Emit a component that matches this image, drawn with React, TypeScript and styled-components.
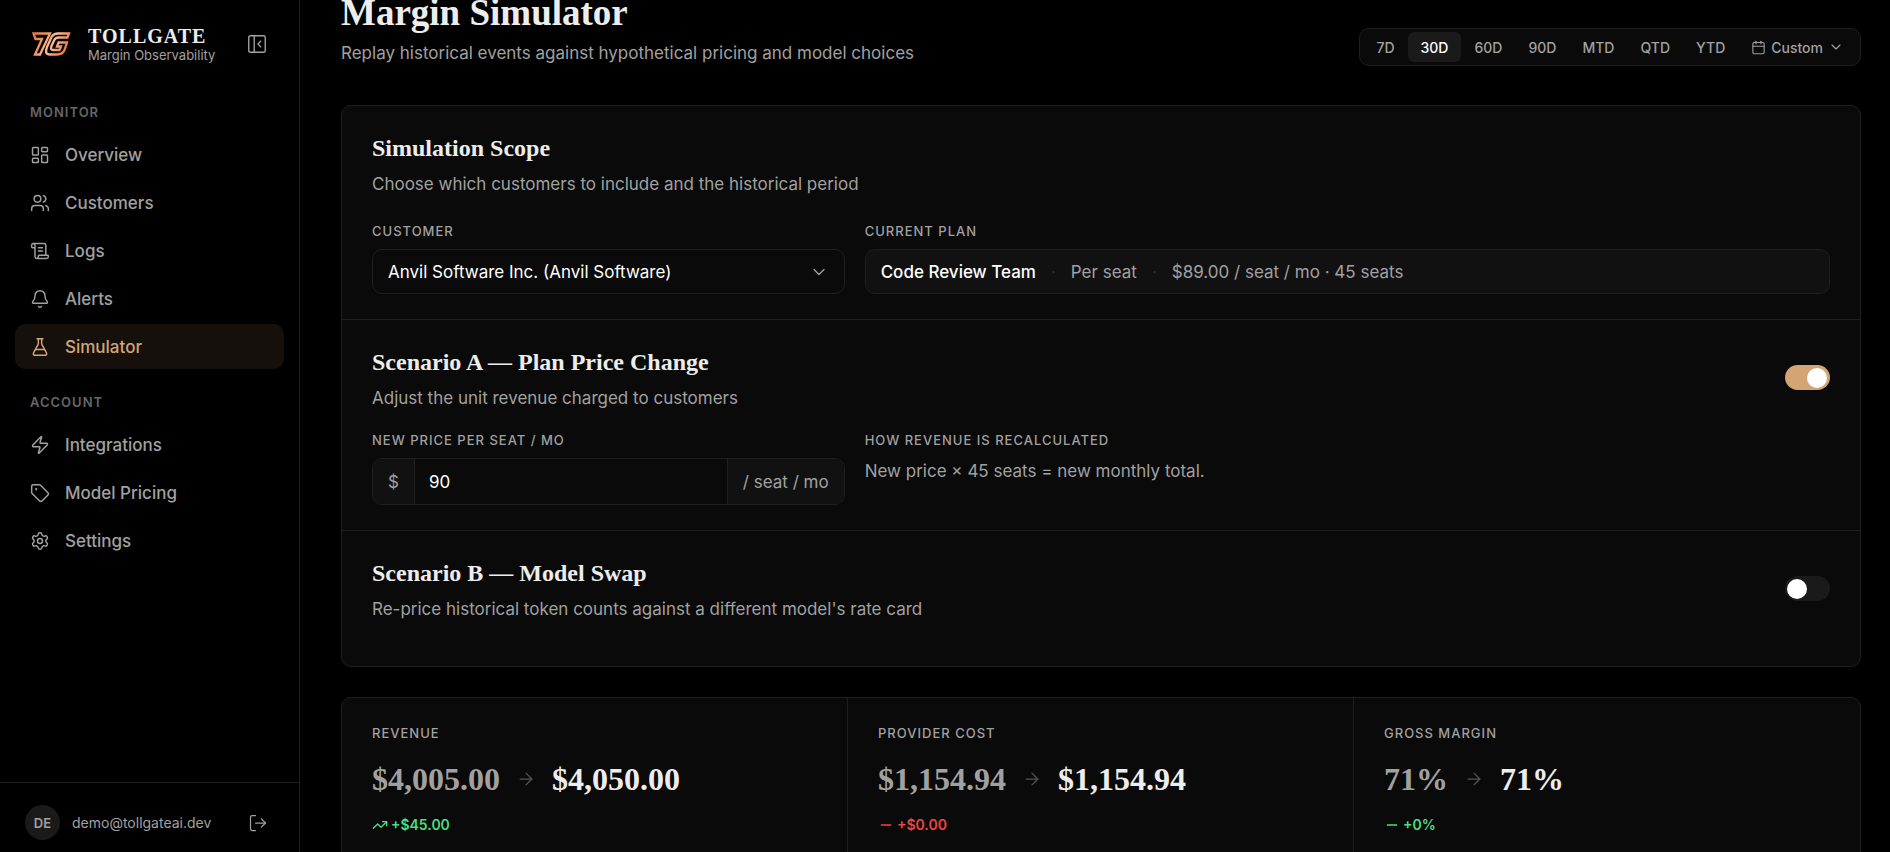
import React, { useState } from "react";
import styled, { createGlobalStyle } from "styled-components";
import {
  ArrowRight,
  Bell,
  Calendar,
  ChevronDown,
  FlaskConical,
  LayoutDashboard,
  LogOut,
  Minus,
  PanelLeftClose,
  ScrollText,
  Settings,
  Tag,
  TrendingUp,
  Users,
  Zap,
} from "lucide-react";

const sans = `Inter, "Liberation Sans", sans-serif`;
const serif = `"Liberation Serif", serif`;

const color = {
  bg: "#000000",
  panel: "#0a0a0a",
  inset: "#111111",
  raised: "#1a1a1a",
  line: "#1f1f1f",
  text: "#ededed",
  strong: "#ffffff",
  muted: "#a1a1a1",
  faint: "#666666",
  ghost: "#555555",
  accent: "#d4a574",
  accentBg: "#15100c",
  good: "#4ade80",
  bad: "#ef4444",
};

const GlobalStyle = createGlobalStyle`
  *, *::before, *::after { box-sizing: border-box; }
  html, body { height: 100%; }
  body {
    margin: 0;
    overflow: hidden;
    background: ${color.bg};
    color: ${color.text};
    font-family: ${sans};
    font-size: 17px;
  }
  button, input, select { font: inherit; color: inherit; margin: 0; }
  h1, h2, p { margin: 0; }
`;

const Shell = styled.div`
  display: flex;
  height: 100vh;
`;

const Sidebar = styled.aside`
  display: flex;
  flex-direction: column;
  flex: 0 0 300px;
  border-right: 1px solid ${color.line};
`;

const Brand = styled.div`
  display: flex;
  align-items: center;
  height: 88px;
  padding: 0 31px;
`;

const BrandText = styled.div`
  flex: 1;
  margin-left: 17px;
  padding-top: 2px;
`;

const BrandName = styled.div`
  font-family: ${serif};
  font-weight: 700;
  font-size: 20px;
  line-height: 20px;
  letter-spacing: 1px;
`;

const BrandTagline = styled.div`
  font-size: 13px;
  line-height: 18px;
  white-space: nowrap;
  color: ${color.muted};
`;

const IconButton = styled.button`
  display: flex;
  padding: 0;
  border: 0;
  background: none;
  color: ${color.muted};
  cursor: pointer;
`;

const Nav = styled.nav`
  flex: 1;
  padding: 14px 15px 0;
`;

const NavGroup = styled.div`
  display: flex;
  flex-direction: column;
  gap: 3px;
  margin-bottom: 23px;
`;

const NavHeading = styled.div`
  margin-bottom: 7px;
  padding-left: 15px;
  font-size: 13px;
  font-weight: 600;
  line-height: 20px;
  letter-spacing: 1px;
  text-transform: uppercase;
  color: ${color.faint};
`;

const NavLink = styled.a<{ $active?: boolean }>`
  display: flex;
  align-items: center;
  gap: 15px;
  height: 45px;
  padding: 0 15px;
  border-radius: 10px;
  font-weight: 500;
  text-decoration: none;
  color: ${(p) => (p.$active ? color.accent : color.muted)};
  background: ${(p) => (p.$active ? color.accentBg : "transparent")};
`;

const Account = styled.div`
  display: flex;
  align-items: center;
  height: 70px;
  padding: 10px 31px 0 25px;
  border-top: 1px solid ${color.line};
`;

const Avatar = styled.div`
  display: flex;
  align-items: center;
  justify-content: center;
  width: 35px;
  height: 35px;
  border-radius: 50%;
  background: ${color.raised};
  font-size: 13px;
  font-weight: 600;
  color: ${color.muted};
`;

const Email = styled.div`
  flex: 1;
  margin-left: 12px;
  font-size: 14px;
  color: ${color.muted};
`;

const Main = styled.main`
  flex: 1;
  min-width: 0;
  overflow: hidden;
  padding: 0 29px 0 41px;
`;

const PageHeader = styled.header`
  display: flex;
  align-items: flex-end;
  justify-content: space-between;
  margin: -6px 0 39px;
`;

const PageTitle = styled.h1`
  font-family: ${serif};
  font-size: 37px;
  font-weight: 700;
  line-height: 38px;
`;

const Lead = styled.p`
  margin-top: 9px;
  line-height: 25px;
  color: ${color.muted};
`;

const Ranges = styled.div`
  display: flex;
  padding: 3px;
  border: 1px solid ${color.line};
  border-radius: 10px;
  background: ${color.panel};
`;

const RangeButton = styled.button<{ $active?: boolean }>`
  display: flex;
  align-items: center;
  gap: 5px;
  height: 30px;
  padding: 0 13px;
  border: 0;
  border-radius: 6px;
  font-size: 14px;
  font-weight: 500;
  cursor: pointer;
  color: ${(p) => (p.$active ? color.strong : color.muted)};
  background: ${(p) => (p.$active ? color.raised : "transparent")};
`;

const Card = styled.section`
  border: 1px solid ${color.line};
  border-radius: 10px;
  background: ${color.panel};
`;

const Section = styled.div`
  padding: 30px 30px 25px;

  & + & {
    border-top: 1px solid ${color.line};
  }
`;

const SectionHeader = styled.div<{ $roomy?: boolean }>`
  display: flex;
  align-items: flex-start;
  justify-content: space-between;
  margin-bottom: ${(p) => (p.$roomy ? 24 : 19)}px;
`;

const SectionTitle = styled.h2`
  font-family: ${serif};
  font-size: 24px;
  font-weight: 700;
  line-height: 25px;
`;

const SectionLead = styled(Lead)`
  margin-top: 11px;
`;

const Fields = styled.div`
  display: grid;
  grid-template-columns: repeat(12, minmax(0, 1fr));
  gap: 20px;
`;

const Field = styled.div<{ $span: number }>`
  grid-column: span ${(p) => p.$span};
`;

const FieldLabel = styled.label`
  display: block;
  margin-bottom: 8px;
  font-size: 13px;
  font-weight: 500;
  line-height: 20px;
  letter-spacing: 1px;
  text-transform: uppercase;
  color: ${color.muted};
`;

const SelectBox = styled.div`
  display: grid;
  align-items: center;

  & > * {
    grid-area: 1 / 1;
  }

  & > svg {
    justify-self: end;
    margin-right: 16px;
    color: ${color.muted};
    pointer-events: none;
  }
`;

const Select = styled.select`
  appearance: none;
  width: 100%;
  height: 45px;
  padding: 0 40px 0 15px;
  border: 1px solid ${color.line};
  border-radius: 10px;
  background: ${color.panel};
  color: ${color.strong};
`;

const Plan = styled.div`
  display: flex;
  align-items: center;
  gap: 15px;
  height: 45px;
  padding: 0 15px;
  border: 1px solid ${color.line};
  border-radius: 10px;
  background: ${color.inset};
  color: ${color.muted};
`;

const PlanName = styled.span`
  font-weight: 500;
  color: ${color.strong};
`;

const Dot = styled.span`
  color: #2c2c2c;
`;

const PriceBox = styled.div`
  display: flex;
  height: 47px;
  overflow: hidden;
  border: 1px solid ${color.line};
  border-radius: 10px;
`;

const Affix = styled.span`
  display: flex;
  align-items: center;
  padding: 0 15px;
  background: ${color.inset};
  color: ${color.muted};
`;

const PriceInput = styled.input`
  flex: 1;
  min-width: 0;
  padding: 0 14px;
  border: 0;
  border-left: 1px solid ${color.line};
  border-right: 1px solid ${color.line};
  background: ${color.panel};
  color: ${color.strong};
  outline: none;
`;

const Note = styled.p`
  line-height: 26px;
  color: ${color.muted};
`;

const Switch = styled.input`
  appearance: none;
  display: flex;
  align-items: center;
  width: 45px;
  height: 25px;
  margin-top: 15px;
  padding: 0 3px 0 2px;
  border-radius: 13px;
  background: ${color.raised};
  cursor: pointer;

  &::before {
    content: "";
    width: 20px;
    height: 20px;
    border-radius: 50%;
    background: ${color.strong};
  }

  &:checked {
    justify-content: flex-end;
    background: ${color.accent};
  }
`;

const Stats = styled(Card)`
  display: grid;
  grid-template-columns: repeat(3, minmax(0, 1fr));
  margin-top: 30px;
`;

const Stat = styled.div`
  padding: 25px 30px;

  &:not(:last-child) {
    border-right: 1px solid ${color.line};
  }
`;

const StatLabel = styled.div`
  font-size: 13px;
  font-weight: 500;
  line-height: 20px;
  letter-spacing: 1px;
  text-transform: uppercase;
  color: ${color.muted};
`;

const StatValues = styled.div`
  display: flex;
  align-items: center;
  gap: 16px;
  margin: 16px 0;
  font-family: ${serif};
  font-size: 32px;
  font-weight: 700;
  line-height: 40px;

  & > svg {
    color: ${color.ghost};
  }
`;

const Before = styled.span`
  color: ${color.muted};
`;

const Delta = styled.div<{ $bad?: boolean }>`
  display: flex;
  align-items: center;
  gap: 3px;
  font-size: 14px;
  font-weight: 600;
  line-height: 20px;
  color: ${(p) => (p.$bad ? color.bad : color.good)};
`;

const Logo = () => (
  <svg width="40" height="24" viewBox="0 0 40 24" fill="none" aria-hidden="true">
    <defs>
      <linearGradient id="copper" gradientUnits="userSpaceOnUse" x1="0" y1="0" x2="40" y2="24">
        <stop offset="0" stopColor="#d96f45" />
        <stop offset="0.3" stopColor="#f0935f" />
        <stop offset="0.5" stopColor="#fbc09c" />
        <stop offset="0.75" stopColor="#ee8a5c" />
        <stop offset="1" stopColor="#d96f45" />
      </linearGradient>
    </defs>
    <g stroke="url(#copper)" strokeWidth="2.3" strokeLinejoin="miter">
      <path d="M2.500 1.500H19L9 22.500H4L11 7H4.500Z" />
      <path d="M38 1.500H27Q22.500 1.500 20.500 5L16 15Q13 22.500 19 22.500H26Q31.500 22.500 33.500 18L36 10.500H27.500L26 14.500H30L28.500 18H22Q19 18 20.500 14L23 8.500Q24.500 5.500 27.500 5.500H36.500Z" />
    </g>
  </svg>
);

const navGroups = [
  {
    title: "Monitor",
    items: [
      { label: "Overview", Icon: LayoutDashboard },
      { label: "Customers", Icon: Users },
      { label: "Logs", Icon: ScrollText },
      { label: "Alerts", Icon: Bell },
      { label: "Simulator", Icon: FlaskConical },
    ],
  },
  {
    title: "Account",
    items: [
      { label: "Integrations", Icon: Zap },
      { label: "Model Pricing", Icon: Tag },
      { label: "Settings", Icon: Settings },
    ],
  },
];

const ranges = ["7D", "30D", "60D", "90D", "MTD", "QTD", "YTD"];

const stats = [
  { label: "Revenue", before: "$4,005.00", after: "$4,050.00", delta: "+$45.00", Icon: TrendingUp },
  { label: "Provider cost", before: "$1,154.94", after: "$1,154.94", delta: "+$0.00", Icon: Minus, bad: true },
  { label: "Gross margin", before: "71%", after: "71%", delta: "+0%", Icon: Minus },
];

export default function App() {
  const [range, setRange] = useState("30D");
  const [price, setPrice] = useState("90");
  const [priceChange, setPriceChange] = useState(true);
  const [modelSwap, setModelSwap] = useState(false);

  return (
    <>
      <GlobalStyle />
      <Shell>
        <Sidebar>
          <Brand>
            <Logo />
            <BrandText>
              <BrandName>TOLLGATE</BrandName>
              <BrandTagline>Margin Observability</BrandTagline>
            </BrandText>
            <IconButton aria-label="Collapse sidebar">
              <PanelLeftClose size={22} strokeWidth={1.5} />
            </IconButton>
          </Brand>
          <Nav>
            {navGroups.map((group) => (
              <NavGroup key={group.title}>
                <NavHeading>{group.title}</NavHeading>
                {group.items.map(({ label, Icon }) => (
                  <NavLink key={label} href="#" $active={label === "Simulator"}>
                    <Icon size={20} strokeWidth={1.75} />
                    {label}
                  </NavLink>
                ))}
              </NavGroup>
            ))}
          </Nav>
          <Account>
            <Avatar>DE</Avatar>
            <Email>demo@tollgateai.dev</Email>
            <IconButton aria-label="Sign out">
              <LogOut size={20} strokeWidth={1.5} />
            </IconButton>
          </Account>
        </Sidebar>

        <Main>
          <PageHeader>
            <div>
              <PageTitle>Margin Simulator</PageTitle>
              <Lead>Replay historical events against hypothetical pricing and model choices</Lead>
            </div>
            <Ranges>
              {ranges.map((r) => (
                <RangeButton key={r} $active={r === range} onClick={() => setRange(r)}>
                  {r}
                </RangeButton>
              ))}
              <RangeButton>
                <Calendar size={15} strokeWidth={1.75} />
                Custom
                <ChevronDown size={16} strokeWidth={1.75} />
              </RangeButton>
            </Ranges>
          </PageHeader>

          <Card>
            <Section>
              <SectionHeader $roomy>
                <div>
                  <SectionTitle>Simulation Scope</SectionTitle>
                  <SectionLead>Choose which customers to include and the historical period</SectionLead>
                </div>
              </SectionHeader>
              <Fields>
                <Field $span={4}>
                  <FieldLabel htmlFor="customer">Customer</FieldLabel>
                  <SelectBox>
                    <Select id="customer">
                      <option>Anvil Software Inc. (Anvil Software)</option>
                    </Select>
                    <ChevronDown size={20} strokeWidth={1.5} />
                  </SelectBox>
                </Field>
                <Field $span={8}>
                  <FieldLabel as="div">Current plan</FieldLabel>
                  <Plan>
                    <PlanName>Code Review Team</PlanName>
                    <Dot>·</Dot>
                    <span>Per seat</span>
                    <Dot>·</Dot>
                    <span>$89.00 / seat / mo · 45 seats</span>
                  </Plan>
                </Field>
              </Fields>
            </Section>

            <Section>
              <SectionHeader>
                <div>
                  <SectionTitle>Scenario A — Plan Price Change</SectionTitle>
                  <SectionLead>Adjust the unit revenue charged to customers</SectionLead>
                </div>
                <Switch
                  type="checkbox"
                  role="switch"
                  aria-label="Plan price change"
                  checked={priceChange}
                  onChange={(e) => setPriceChange(e.target.checked)}
                />
              </SectionHeader>
              <Fields>
                <Field $span={4}>
                  <FieldLabel htmlFor="price">New price per seat / mo</FieldLabel>
                  <PriceBox>
                    <Affix>$</Affix>
                    <PriceInput id="price" value={price} onChange={(e) => setPrice(e.target.value)} />
                    <Affix>/ seat / mo</Affix>
                  </PriceBox>
                </Field>
                <Field $span={8}>
                  <FieldLabel as="div">How revenue is recalculated</FieldLabel>
                  <Note>New price × 45 seats = new monthly total.</Note>
                </Field>
              </Fields>
            </Section>

            <Section>
              <SectionHeader>
                <div>
                  <SectionTitle>Scenario B — Model Swap</SectionTitle>
                  <SectionLead>Re-price historical token counts against a different model's rate card</SectionLead>
                </div>
                <Switch
                  type="checkbox"
                  role="switch"
                  aria-label="Model swap"
                  checked={modelSwap}
                  onChange={(e) => setModelSwap(e.target.checked)}
                />
              </SectionHeader>
            </Section>
          </Card>

          <Stats>
            {stats.map(({ label, before, after, delta, Icon, bad }) => (
              <Stat key={label}>
                <StatLabel>{label}</StatLabel>
                <StatValues>
                  <Before>{before}</Before>
                  <ArrowRight size={20} strokeWidth={1.5} />
                  <span>{after}</span>
                </StatValues>
                <Delta $bad={bad}>
                  <Icon size={16} strokeWidth={2} />
                  {delta}
                </Delta>
              </Stat>
            ))}
          </Stats>
        </Main>
      </Shell>
    </>
  );
}
